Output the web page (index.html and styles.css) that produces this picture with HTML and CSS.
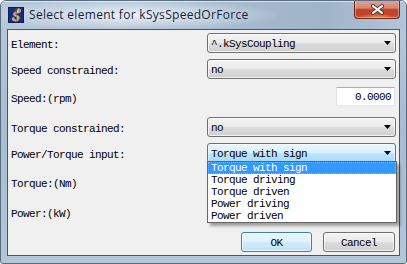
FILE: index.html
```html
<!DOCTYPE html>
<html lang="en">
<head>
    <meta charset="UTF-8">
    <title>Select element for kSysSpeedOrForce</title>
    <link rel="stylesheet" href="styles.css">
</head>
<body>
    <div class="window">
        <div class="titlebar">
            <svg class="app-icon" width="16" height="16" viewBox="0 0 16 16">
                <rect width="16" height="16" fill="#1a2f7c"/>
                <rect x="0.5" y="0.5" width="15" height="15" fill="none" stroke="#0e1d58"/>
                <path d="M10.5 2.5 C12.5 3 12 5 10 5.3 C8 5.6 6 5.8 6.3 7.6 C6.6 9.2 10.2 8.6 10.6 10.6 C11 12.6 8.6 13.8 6.4 13.2 C5 12.8 4.6 11.8 5.4 11.2" fill="none" stroke="#c4a274" stroke-width="2.4" stroke-linecap="round"/>
                <path d="M9.5 3 C11 3.2 11 4.3 9.6 4.6" fill="none" stroke="#f1e6d0" stroke-width="1" stroke-linecap="round"/>
                <path d="M7.2 8.2 C8 8.9 9.6 9 9.8 10.4" fill="none" stroke="#efe0c6" stroke-width="0.9" stroke-linecap="round"/>
                <path d="M8 1.6 L8.6 14.4" stroke="#8a6a44" stroke-width="0.8"/>
            </svg>
            <span class="title">Select element for kSysSpeedOrForce</span>
            <div class="close-btn">
                <svg width="13" height="11" viewBox="0 0 13 11">
                    <path d="M2 2 L11 9 M11 2 L2 9" stroke="#4a3a38" stroke-width="4" stroke-linecap="round"/>
                    <path d="M2 2 L11 9 M11 2 L2 9" stroke="#ffffff" stroke-width="2.2" stroke-linecap="round"/>
                </svg>
            </div>
        </div>

        <div class="client">
            <div class="row row-element">
                <span class="label">Element:</span>
                <div class="combo">
                    <span class="combo-text">^.kSysCoupling</span>
                    <svg class="arrow" width="7" height="4" viewBox="0 0 7 4"><polygon points="0,0 7,0 3.5,4" fill="#000"/></svg>
                </div>
            </div>

            <div class="row row-speed-con">
                <span class="label">Speed constrained:</span>
                <div class="combo">
                    <span class="combo-text">no</span>
                    <svg class="arrow" width="7" height="4" viewBox="0 0 7 4"><polygon points="0,0 7,0 3.5,4" fill="#000"/></svg>
                </div>
            </div>

            <div class="row row-speed">
                <span class="label">Speed:(rpm)</span>
                <div class="text-input">0.0000</div>
            </div>

            <div class="row row-torque-con">
                <span class="label">Torque constrained:</span>
                <div class="combo">
                    <span class="combo-text">no</span>
                    <svg class="arrow" width="7" height="4" viewBox="0 0 7 4"><polygon points="0,0 7,0 3.5,4" fill="#000"/></svg>
                </div>
            </div>

            <div class="row row-input">
                <span class="label">Power/Torque input:</span>
                <div class="combo-wrap">
                    <div class="combo combo-open">
                        <span class="combo-text">Torque with sign</span>
                        <svg class="arrow" width="7" height="4" viewBox="0 0 7 4"><polygon points="0,0 7,0 3.5,4" fill="#000"/></svg>
                    </div>
                    <ul class="dropdown">
                        <li class="selected">Torque with sign</li>
                        <li>Torque driving</li>
                        <li>Torque driven</li>
                        <li>Power driving</li>
                        <li>Power driven</li>
                    </ul>
                </div>
            </div>

            <div class="row row-torque">
                <span class="label">Torque:(Nm)</span>
            </div>

            <div class="row row-power">
                <span class="label">Power:(kW)</span>
            </div>

            <div class="buttons">
                <button class="btn btn-default">OK</button>
                <button class="btn btn-cancel">Cancel</button>
            </div>
        </div>
    </div>
</body>
</html>
```

FILE: styles.css
```css
* {
    margin: 0;
    padding: 0;
    box-sizing: border-box;
}

body {
    background: #ffffff;
    font-family: 'Liberation Mono', monospace;
    font-size: 11px;
    letter-spacing: -0.6px;
    color: #000;
}

.window {
    width: 407px;
    height: 264px;
    border: 1px solid #5a6c80;
    border-radius: 6px 6px 3px 3px;
    background: linear-gradient(180deg, #b8c9da 0%, #a9bdd0 50%, #b4c6d8 100%);
    display: flex;
    flex-direction: column;
    overflow: hidden;
}

/* title bar */

.titlebar {
    height: 28px;
    display: flex;
    align-items: flex-start;
    padding-left: 7px;
    background:
        radial-gradient(ellipse 150px 16px at 130px 14px, rgba(238, 244, 249, 0.95), rgba(238, 244, 249, 0) 100%),
        linear-gradient(90deg, #b6c8da 0%, #a7bbce 55%, #a0b4c8 80%, #b3c5d7 100%);
    box-shadow: inset 0 1px 0 rgba(255, 255, 255, 0.6);
}

.app-icon {
    margin-top: 6px;
    flex-shrink: 0;
}

.title {
    font-family: 'Open Sans', 'Noto Sans', sans-serif;
    font-size: 12px;
    letter-spacing: 0.3px;
    color: #1b1d3a;
    margin-left: 5px;
    margin-top: 5px;
    line-height: 17px;
}

.close-btn {
    margin-left: auto;
    margin-right: 6px;
    margin-top: -1px;
    width: 46px;
    height: 19px;
    border: 1px solid #6b2d22;
    border-top: none;
    border-radius: 0 0 4px 4px;
    background:
        radial-gradient(ellipse 18px 5px at 50% 100%, rgba(240, 150, 80, 0.9), rgba(240, 150, 80, 0) 100%),
        linear-gradient(180deg, #e4a595 0%, #d68574 45%, #c3442d 52%, #c2412a 80%, #cf5a3a 100%);
    box-shadow: inset 0 0 0 1px rgba(255, 210, 200, 0.45);
    display: flex;
    align-items: center;
    justify-content: center;
}

/* client area */

.client {
    flex: 1;
    margin: 0 6px 7px 6px;
    background: #f0f0f0;
    border: 1px solid #48566a;
    padding: 3px 3px 0 3px;
}

.row {
    display: grid;
    grid-template-columns: 196px 189px;
    height: 20px;
    align-items: start;
}

.label {
    line-height: 20px;
    padding-top: 2px;
    white-space: nowrap;
}

.row-element { margin-bottom: 6px; }
.row-speed-con { margin-bottom: 8px; }
.row-speed { height: 19px; margin-bottom: 11px; }
.row-torque-con { margin-bottom: 6px; }
.row-input { margin-bottom: 9px; }
.row-torque { margin-bottom: 10px; }
.row-power { margin-bottom: 10px; }

.combo {
    height: 20px;
    border: 1px solid #707070;
    border-radius: 3px;
    background: linear-gradient(180deg, #f2f2f2 0%, #ebebeb 50%, #dddddd 50%, #cfcfcf 100%);
    display: flex;
    align-items: center;
    padding-left: 3px;
    padding-right: 4px;
    box-shadow: inset 0 0 0 1px rgba(255, 255, 255, 0.7);
}

.combo-text {
    flex: 1;
    line-height: 18px;
    padding-top: 1px;
    white-space: nowrap;
}

.arrow {
    flex-shrink: 0;
}

.combo-open {
    border-color: #3c7fb1;
    background: linear-gradient(180deg, #eaf6fd 0%, #d9f0fc 50%, #bee6fd 50%, #a7d9f5 100%);
    box-shadow: inset 0 0 0 1px rgba(255, 255, 255, 0.5);
}

.combo-wrap {
    position: relative;
}

.dropdown {
    position: absolute;
    top: 18px;
    left: 0;
    right: -1px;
    list-style: none;
    background: #ffffff;
    border: 1px solid #646464;
    box-shadow: 3px 3px 3px rgba(0, 0, 0, 0.35);
    z-index: 2;
}

.dropdown li {
    height: 12px;
    line-height: 12px;
    padding-left: 3px;
    white-space: nowrap;
}

.dropdown li.selected {
    background: #3399ff;
    color: #ffffff;
    outline: 1px dotted #e89a50;
    outline-offset: -1px;
}

.text-input {
    justify-self: end;
    margin-right: 1px;
    width: 59px;
    height: 19px;
    background: #ffffff;
    border: 1px solid #e2e3ea;
    border-top-color: #abadb3;
    border-bottom-color: #e3e9ef;
    text-align: right;
    padding-right: 3px;
    line-height: 17px;
    padding-top: 1px;
}

.buttons {
    display: flex;
    justify-content: flex-end;
    gap: 11px;
    padding-right: 1px;
}

.btn {
    font-family: 'Liberation Mono', monospace;
    font-size: 11px;
    letter-spacing: -0.6px;
    color: #000;
    height: 20px;
    border-radius: 3px;
    border: 1px solid #707070;
    background: linear-gradient(180deg, #f2f2f2 0%, #ebebeb 50%, #dddddd 50%, #cfcfcf 100%);
    box-shadow: inset 0 0 0 1px rgba(255, 255, 255, 0.7);
    padding-top: 1px;
}

.btn-default {
    width: 71px;
    border-color: #3c7fb1;
    background: linear-gradient(180deg, #eaf6fd 0%, #e0f2fc 50%, #d0ebfa 50%, #c0e3f7 100%);
}

.btn-cancel {
    width: 72px;
}
```
